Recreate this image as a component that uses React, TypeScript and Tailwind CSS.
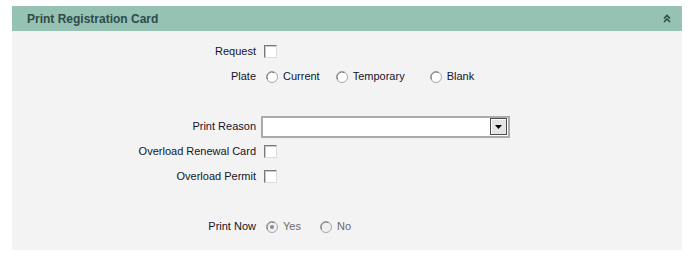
import React from "react";

const Checkbox = () => (
  <div className="w-[13px] h-[13px] bg-white border border-t-[#7a7a7a] border-l-[#7a7a7a] border-b-[#dcdcdc] border-r-[#dcdcdc] shadow-[inset_1px_1px_0_#c8c8c8]" />
);

const Radio = ({ checked = false, disabled = false }: { checked?: boolean; disabled?: boolean }) => (
  <svg width="12" height="12" viewBox="0 0 12 12" className="shrink-0">
    <circle cx="6" cy="6" r="5.5" fill={disabled ? "#f0f0f0" : "#ffffff"} stroke="#a6a6a6" />
    <path d="M1.7 8.5 A5 5 0 0 1 8.5 1.7" fill="none" stroke="#7c7c7c" strokeWidth="1" />
    {checked && <circle cx="6" cy="6" r="2" fill="#8a8a8a" />}
  </svg>
);

const Row = ({ label, children }: { label?: string; children?: React.ReactNode }) => (
  <div className="flex items-center h-[25px]">
    <div className="w-[244px] text-right">{label}</div>
    <div className="ml-[8px] flex items-center">{children}</div>
  </div>
);

export default function App() {
  return (
    <div className="w-[700px] h-[259px] bg-white pt-[6px] pl-[12px]" style={{ fontFamily: '"Liberation Sans", Arial, sans-serif' }}>
      <div className="w-[670px] h-[244px] bg-[#f3f3f3]">
        <div className="h-[25px] bg-[#96c2b4] flex items-center justify-between pl-[15px] pr-[11px]">
          <span className="text-[12px] font-bold text-[#2e4a4a]">Print Registration Card</span>
          <svg width="8" height="9" viewBox="0 0 8 9">
            <path d="M1 4.5 L4 1.5 L7 4.5 M1 8 L4 5 L7 8" fill="none" stroke="#2e4a4a" strokeWidth="1.6" />
          </svg>
        </div>
        <div className="pt-[8px] text-[11px] text-[#14142a]">
          <Row label="Request">
            <Checkbox />
          </Row>
          <Row label="Plate">
            <div className="flex items-center">
              <span className="ml-[2px]"><Radio /></span>
              <span className="ml-[5px]">Current</span>
              <span className="ml-[16px]"><Radio /></span>
              <span className="ml-[5px]">Temporary</span>
              <span className="ml-[25px]"><Radio /></span>
              <span className="ml-[5px]">Blank</span>
            </div>
          </Row>
          <Row />
          <Row label="Print Reason">
            <div className="-ml-[3px] w-[249px] h-[22px] bg-white border-2 border-[#ababab] flex items-center justify-end pr-[1px]">
              <div className="w-[17px] h-[17px] bg-[#e4e4e4] border border-[#4d4d4d] shadow-[inset_1px_1px_0_#ffffff] flex items-center justify-center">
                <svg width="7" height="4" viewBox="0 0 7 4"><path d="M0 0 H7 L3.5 4 Z" fill="#000" /></svg>
              </div>
            </div>
          </Row>
          <Row label="Overload Renewal Card">
            <Checkbox />
          </Row>
          <Row label="Overload Permit">
            <Checkbox />
          </Row>
          <Row />
          <Row label="Print Now">
            <div className="flex items-center text-[#6a6a6a]">
              <span className="ml-[2px]"><Radio checked disabled /></span>
              <span className="ml-[5px]">Yes</span>
              <span className="ml-[19px]"><Radio disabled /></span>
              <span className="ml-[5px]">No</span>
            </div>
          </Row>
        </div>
      </div>
    </div>
  );
}
